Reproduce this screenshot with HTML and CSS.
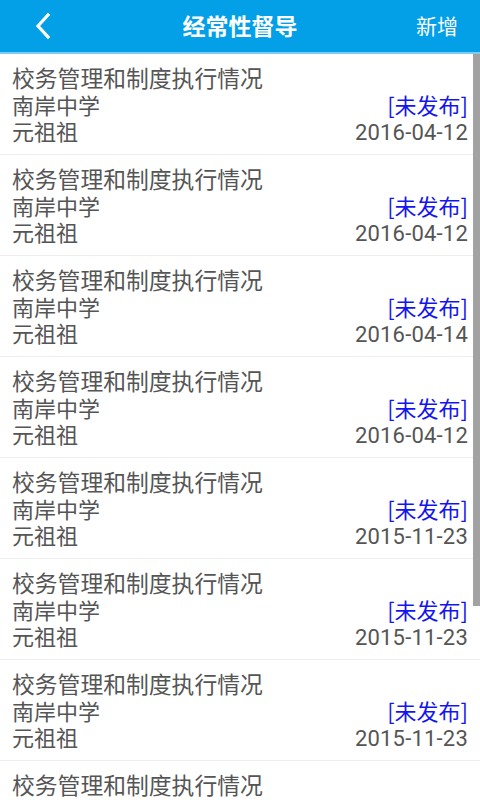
FILE: index.html
```html
<!DOCTYPE html>
<html lang="zh-CN">
<head>
    <meta charset="UTF-8">
    <meta name="viewport" content="width=device-width, initial-scale=1.0">
    <title>经常性督导</title>
    <link rel="stylesheet" href="styles.css">
</head>
<body>
    <div class="app">
        <!-- 顶部标题栏 -->
        <div class="topbar">
            <span class="back">
                <svg width="18" height="26" viewBox="0 0 18 26"><path d="M14 2 L4 13 L14 24" fill="none" stroke="#fff" stroke-width="3.2" stroke-linecap="square"/></svg>
            </span>
            <h1>经常性督导</h1>
            <span class="add">新增</span>
        </div>

        <!-- 督导列表 -->
        <div class="list">
            <div class="item">
                <div class="title">校务管理和制度执行情况</div>
                <div class="line"><span>南岸中学</span><span class="status">[未发布]</span></div>
                <div class="line"><span>元祖祖</span><span class="date">2016-04-12</span></div>
            </div>
            <div class="item">
                <div class="title">校务管理和制度执行情况</div>
                <div class="line"><span>南岸中学</span><span class="status">[未发布]</span></div>
                <div class="line"><span>元祖祖</span><span class="date">2016-04-12</span></div>
            </div>
            <div class="item">
                <div class="title">校务管理和制度执行情况</div>
                <div class="line"><span>南岸中学</span><span class="status">[未发布]</span></div>
                <div class="line"><span>元祖祖</span><span class="date">2016-04-14</span></div>
            </div>
            <div class="item">
                <div class="title">校务管理和制度执行情况</div>
                <div class="line"><span>南岸中学</span><span class="status">[未发布]</span></div>
                <div class="line"><span>元祖祖</span><span class="date">2016-04-12</span></div>
            </div>
            <div class="item">
                <div class="title">校务管理和制度执行情况</div>
                <div class="line"><span>南岸中学</span><span class="status">[未发布]</span></div>
                <div class="line"><span>元祖祖</span><span class="date">2015-11-23</span></div>
            </div>
            <div class="item">
                <div class="title">校务管理和制度执行情况</div>
                <div class="line"><span>南岸中学</span><span class="status">[未发布]</span></div>
                <div class="line"><span>元祖祖</span><span class="date">2015-11-23</span></div>
            </div>
            <div class="item">
                <div class="title">校务管理和制度执行情况</div>
                <div class="line"><span>南岸中学</span><span class="status">[未发布]</span></div>
                <div class="line"><span>元祖祖</span><span class="date">2015-11-23</span></div>
            </div>
            <div class="item">
                <div class="title">校务管理和制度执行情况</div>
                <div class="line"><span>南岸中学</span><span class="status">[未发布]</span></div>
                <div class="line"><span>元祖祖</span><span class="date">2015-11-23</span></div>
            </div>
        </div>

        <div class="scrollbar"></div>
    </div>
</body>
</html>
```

FILE: styles.css
```css
* {
    box-sizing: border-box;
}
html, body {
    margin: 0;
    padding: 0;
    height: 100%;
    overflow: hidden;
}
body {
    background-color: #fff;
    font-family: "Noto Sans CJK SC", sans-serif;
}
.app {
    position: relative;
    height: 800px;
    overflow: hidden;
}
.topbar {
    height: 54px;
    background-color: #03a0e8;
    border-bottom: 2px solid #7dcdf3;
    display: grid;
    grid-template-columns: 1fr auto 1fr;
    align-items: center;
    padding: 0 22px 2px 34px;
    color: white;
}
.back {
    display: flex;
    margin-top: 2px;
}
.topbar h1 {
    margin: 0;
    font-size: 23px;
    line-height: 30px;
    font-weight: bold;
    position: relative;
    left: -6px;
}
.add {
    text-align: right;
    font-size: 21px;
    line-height: 30px;
}
.item {
    padding: 11px 12px;
    border-bottom: 1px solid #eeeeee;
    color: #555;
    font-size: 22px;
    line-height: 26px;
}
.title {
    font-size: 22.8px;
    height: 26px;
}
.line {
    display: flex;
    justify-content: space-between;
    align-items: baseline;
    height: 26px;
}
.status {
    color: #1414f0;
}
.date {
    font-family: Roboto, sans-serif;
    letter-spacing: 0.2px;
}
.scrollbar {
    position: absolute;
    right: 0;
    top: 54px;
    width: 7px;
    height: 552px;
    background-color: #a2a2a2;
}
```
